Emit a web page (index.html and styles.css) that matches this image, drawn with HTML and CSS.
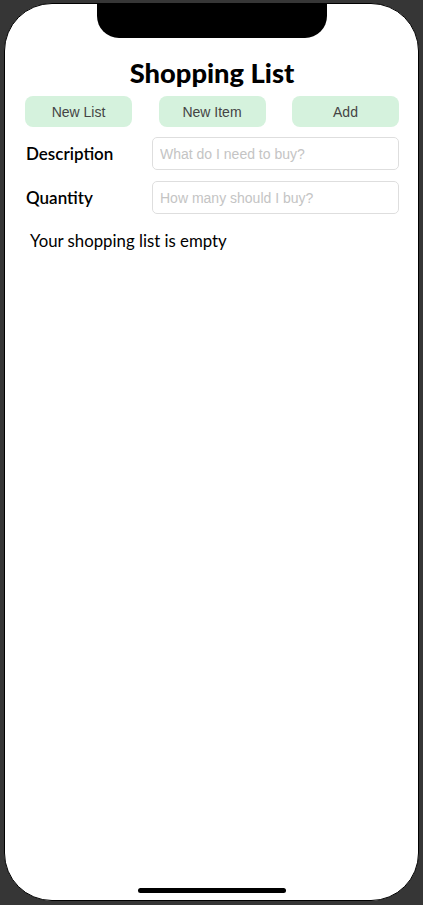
FILE: index.html
```html
<!DOCTYPE html>
<html>
<head>
<meta charset="utf-8">
<link rel="stylesheet" href="styles.css">
</head>
<body>
<div class="phone">
  <div class="notch"></div>
  <main class="screen">
    <h1 class="title">Shopping List</h1>
    <div class="actions">
      <button class="btn">New List</button>
      <button class="btn">New Item</button>
      <button class="btn">Add</button>
    </div>
    <div class="field">
      <label class="label">Description</label>
      <input class="input" placeholder="What do I need to buy?">
    </div>
    <div class="field">
      <label class="label">Quantity</label>
      <input class="input" placeholder="How many should I buy?">
    </div>
    <p class="empty">Your shopping list is empty</p>
  </main>
  <div class="home"></div>
</div>
</body>
</html>
```
FILE: styles.css
```css
html, body {
  margin: 0;
  padding: 0;
  background: #363636;
}
body {
  width: 423px;
  height: 905px;
  overflow: hidden;
  padding-top: 3px;
  box-sizing: border-box;
}
.phone {
  position: relative;
  margin-left: 4px;
  width: 415px;
  height: 898px;
  box-sizing: border-box;
  border: 1px solid #000;
  border-radius: 48px;
  background: #fff;
  overflow: hidden;
}
.notch {
  position: absolute;
  left: 92px;
  top: -2px;
  width: 230px;
  height: 36px;
  background: #000;
  border-radius: 0 0 22px 22px;
}
.home {
  position: absolute;
  left: 133px;
  bottom: 7px;
  width: 148px;
  height: 5px;
  border-radius: 3px;
  background: #000;
}
.screen {
  padding: 53px 19px 0 20px;
  font-family: "Lato", "DejaVu Sans", sans-serif;
}
.title {
  margin: 0;
  text-align: center;
  font-size: 27.3px;
  line-height: 32px;
  font-weight: 900;
  color: #000;
}
.actions {
  display: flex;
  justify-content: space-between;
  margin-top: 7px;
}
.btn {
  width: 107px;
  height: 31px;
  border: none;
  border-radius: 8px;
  background: #d5f2dd;
  color: #444;
  font-family: "Liberation Sans", Arial, sans-serif;
  font-size: 14px;
  padding: 0;
}
.field {
  display: flex;
  align-items: center;
  margin-top: 10px;
}
.field + .field {
  margin-top: 11px;
}
.label {
  width: 126px;
  flex: none;
  font-size: 17px;
  font-weight: 600;
  color: #000;
  padding-left: 1px;
}
.input {
  flex: 1;
  height: 33px;
  box-sizing: border-box;
  border: 1px solid #dedede;
  border-radius: 5px;
  padding: 0 7px;
  font-family: "Liberation Sans", Arial, sans-serif;
  font-size: 14px;
  outline: none;
}
.input::placeholder {
  color: #c4c4c4;
}
.empty {
  margin: 16px 0 0 5px;
  font-size: 16.8px;
  color: #000;
}
```
